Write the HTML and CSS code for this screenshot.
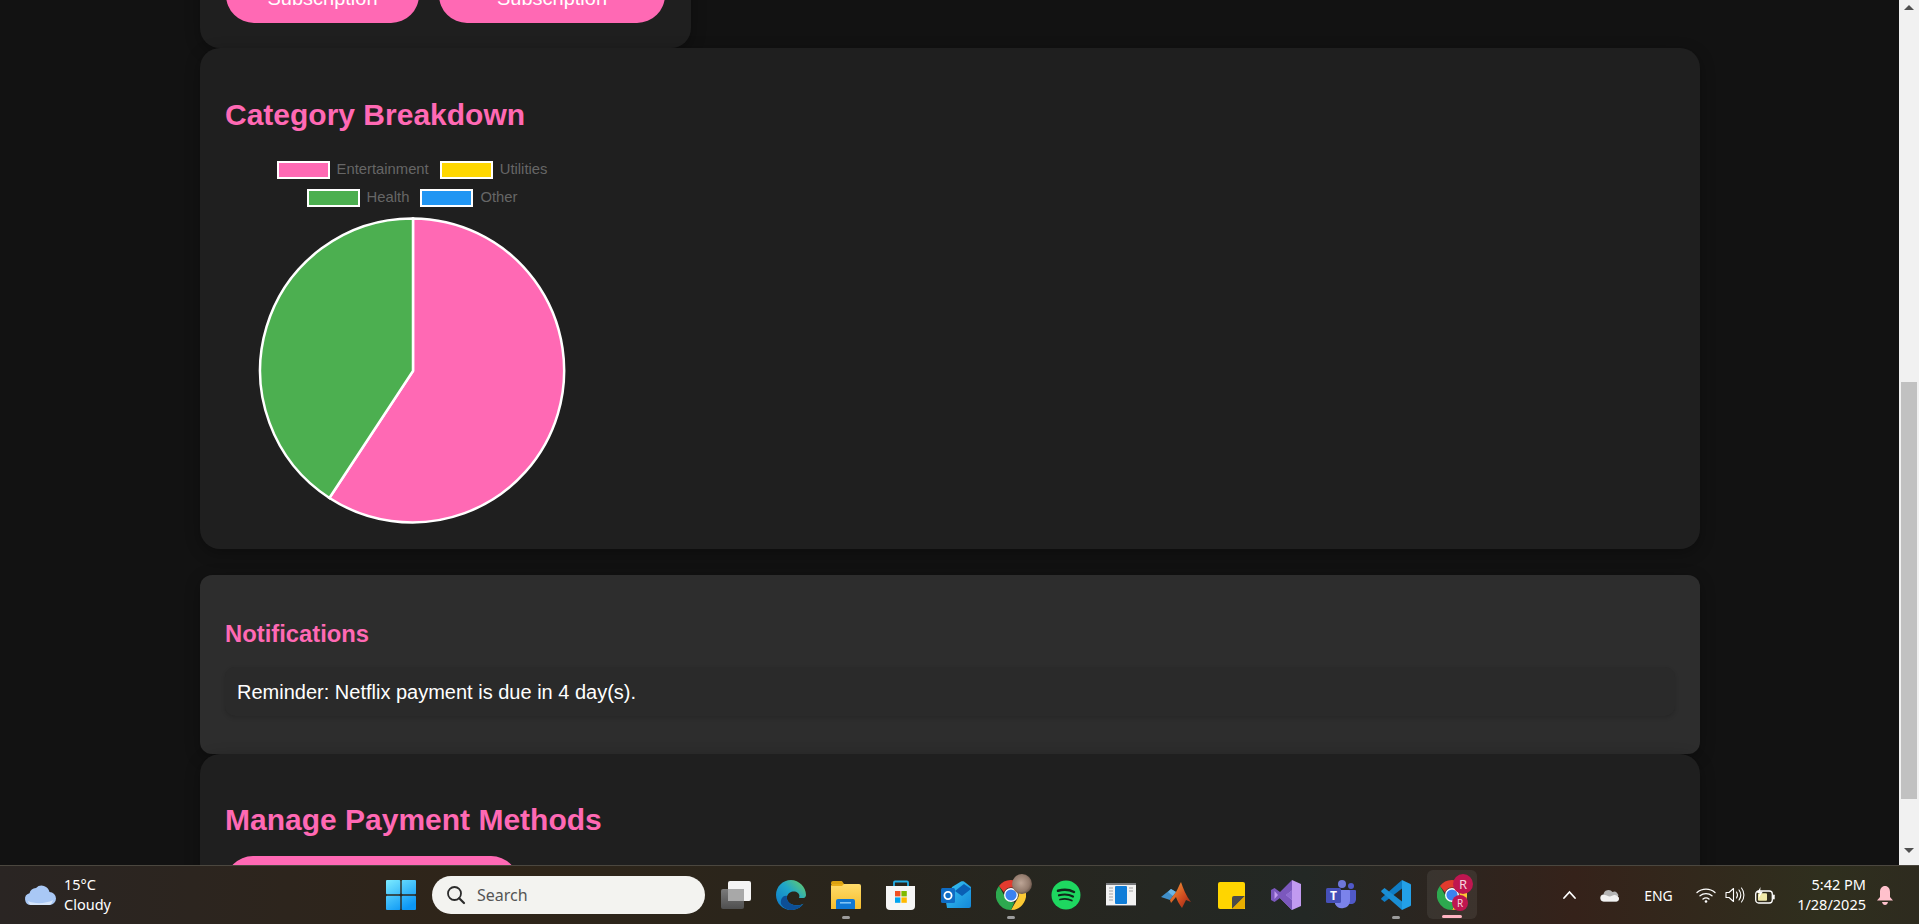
FILE: index.html
```html
<!DOCTYPE html>
<html lang="en">
<head>
    <meta charset="UTF-8">
    <meta name="viewport" content="width=device-width, initial-scale=1.0">
    <title>Subscription Tracker</title>
    <link rel="stylesheet" href="styles.css">
</head>
<body>
    <svg class="defs" width="0" height="0" aria-hidden="true">
        <defs>
            <linearGradient id="edgeTop" x1="0" y1="1" x2="1" y2="0"><stop offset="0" stop-color="#0c74c9"/><stop offset=".55" stop-color="#1fa6c9"/><stop offset="1" stop-color="#6fd05f"/></linearGradient>
            <linearGradient id="folderBody" x1="0" y1="0" x2="0" y2="1"><stop offset="0" stop-color="#ffdc6b"/><stop offset="1" stop-color="#f6bd2c"/></linearGradient>
            <linearGradient id="outlookEnv" x1="0" y1="0" x2="1" y2="1"><stop offset="0" stop-color="#38c6f4"/><stop offset="1" stop-color="#1487d8"/></linearGradient>
            <linearGradient id="matlabPeak" x1="0" y1="0" x2="1" y2="1"><stop offset="0" stop-color="#f5a13a"/><stop offset=".6" stop-color="#cf4a1f"/><stop offset="1" stop-color="#8c2415"/></linearGradient>
            <linearGradient id="winTile" gradientUnits="userSpaceOnUse" x1="0" y1="0" x2="18" y2="30"><stop offset="0" stop-color="#7cebff"/><stop offset="1" stop-color="#0c97f5"/></linearGradient>
            <linearGradient id="taskBack" x1="0" y1="0" x2="0" y2="1"><stop offset="0" stop-color="#7a7a7a"/><stop offset="1" stop-color="#4f4f4f"/></linearGradient>
            <radialGradient id="avatarPhoto" cx=".45" cy=".45" r=".6"><stop offset="0" stop-color="#bda596"/><stop offset=".7" stop-color="#937b6d"/><stop offset="1" stop-color="#5f4c42"/></radialGradient>
            <symbol id="chrome" viewBox="0 0 30 30">
                <path d="M15 0a15 15 0 0 1 13 7.500H15a7.500 7.500 0 0 0-7 4.800L2.900 6A15 15 0 0 1 15 0z" fill="#e33b2e"/>
                <path d="M28 7.500A15 15 0 0 1 15 30l6.500-11.200A7.500 7.500 0 0 0 21.500 11z" fill="#fcc934"/>
                <path d="M2.900 6l6.600 11.500a7.500 7.500 0 0 0 9 4.500L15 30A15 15 0 0 1 2.900 6z" fill="#2da94f"/>
                <circle cx="15" cy="15" r="7" fill="#fff"/>
                <circle cx="15" cy="15" r="5.600" fill="#3b82f0"/>
            </symbol>
        </defs>
    </svg>

    <div class="window">
        <main class="page">
            <section class="card plans-card">
                <div class="plan-btns">
                    <button type="button" class="btn btn-first">Subscription</button>
                    <button type="button" class="btn btn-second">Subscription</button>
                </div>
            </section>

            <section class="card breakdown-card">
                <h2>Category Breakdown</h2>
                <div class="chart">
                    <div class="legend">
                        <div class="legend-row">
                            <span class="legend-item"><i class="swatch pink"></i>Entertainment</span>
                            <span class="legend-item"><i class="swatch yellow"></i>Utilities</span>
                        </div>
                        <div class="legend-row">
                            <span class="legend-item"><i class="swatch green"></i>Health</span>
                            <span class="legend-item"><i class="swatch blue"></i>Other</span>
                        </div>
                    </div>
                    <svg class="pie" width="310" height="310" viewBox="0 0 310 310">
                        <path d="M155 155L155 2.500A152 152 0 1 1 71.400 282Z" fill="#ff69b4" stroke="#fff" stroke-width="2.500"/>
                        <path d="M155 155L71.400 282A152 152 0 0 1 155 2.500Z" fill="#4caf50" stroke="#fff" stroke-width="2.500"/>
                    </svg>
                </div>
            </section>

            <section class="notifications">
                <h3>Notifications</h3>
                <div class="notice">Reminder: Netflix payment is due in 4 day(s).</div>
            </section>

            <section class="card payment-card">
                <h2>Manage Payment Methods</h2>
                <button type="button" class="btn btn-pay">Add Payment Method</button>
            </section>
        </main>

        <div class="scrollbar">
            <span class="arrow-up"></span>
            <span class="thumb"></span>
            <span class="arrow-down"></span>
        </div>
    </div>

    <footer class="taskbar">
        <div class="weather">
            <svg width="32" height="22" viewBox="0 0 32 22">
                <path d="M7 21a6 6 0 0 1-1.500-11.800A7 7 0 0 1 12 4a8 8 0 0 1 13.500 4A6.500 6.500 0 0 1 25.500 21z" fill="#a9c8f5"/>
                <path d="M4 17c6 3 18 3 25-1-1 3-2 5-4 5H7c-1.500 0-2.500-2-3-4z" fill="#d7e6fb"/>
            </svg>
            <div class="weather-text">
                <span>15°C</span>
                <span>Cloudy</span>
            </div>
        </div>

        <div class="tb-center">
            <div class="tb-slot start-slot">
                <svg width="30" height="30" viewBox="0 0 30 30" fill="url(#winTile)">
                    <rect x="0" y="0" width="14.300" height="14.300" rx="1"/>
                    <rect x="15.700" y="0" width="14.300" height="14.300" rx="1"/>
                    <rect x="0" y="15.700" width="14.300" height="14.300" rx="1"/>
                    <rect x="15.700" y="15.700" width="14.300" height="14.300" rx="1"/>
                </svg>
            </div>
            <div class="search">
                <svg width="20" height="20" viewBox="0 0 20 20">
                    <circle cx="8.500" cy="8.500" r="6.500" fill="none" stroke="#2b2b2b" stroke-width="1.800"/>
                    <path d="M13.200 13.200L18 18" stroke="#2b2b2b" stroke-width="2.200" stroke-linecap="round"/>
                </svg>
                <span>Search</span>
            </div>

            <div class="tb-slot">
                <svg width="30" height="30" viewBox="0 0 30 30">
                    <rect x="0" y="9" width="23" height="20" rx="2" fill="url(#taskBack)"/>
                    <rect x="7" y="1" width="23" height="20" rx="2" fill="#f4f4f4"/>
                    <rect x="7" y="9" width="16" height="12" fill="#a8a8a8"/>
                </svg>
            </div>
            <div class="tb-slot">
                <svg width="30" height="30" viewBox="0 0 30 30">
                    <path d="M15 0C6.700 0 0 6.700 0 15c0 8.300 6.700 15 15 15 5.200 0 9.700-2.500 12.400-6.300-2.400 1.300-5.200 1.800-7.500 1.500C13.500 25 10 20.500 11 16.500 12 12.500 16.500 10.500 20 11.800c3.800 1.500 3.800 4.800 3 6.200h4.500c1.500 0 2.500-1.500 2.500-3C30 7 23 0 15 0z" fill="url(#edgeTop)"/>
                    <path d="M11 16c-3-1-7 2-6 8 2 3.500 6 6 10 6 5.200 0 9.700-2.500 12.400-6.300-2.400 1.300-5.200 1.800-7.500 1.500C14 25 10 20.500 11 16z" fill="#0d4f96"/>
                </svg>
            </div>
            <div class="tb-slot running">
                <svg width="30" height="30" viewBox="0 0 30 30">
                    <path d="M0 3a2 2 0 0 1 2-2h8c1 0 1.500.5 2 1.500L13 4h-13z" fill="#dba210"/>
                    <path d="M0 29V6a2 2 0 0 1 2-2h26a2 2 0 0 1 2 2v22a1 1 0 0 1-1 1z" fill="url(#folderBody)"/>
                    <path d="M0 6h11l2-2H2a2 2 0 0 0-2 2z" fill="#e9ad16"/>
                    <path d="M5 29v-8a2 2 0 0 1 2-2h15a2 2 0 0 1 2 2v8z" fill="#0f78d4"/>
                    <rect x="9" y="22" width="11" height="1.600" fill="#7fc4f5"/>
                </svg>
            </div>
            <div class="tb-slot">
                <svg width="30" height="30" viewBox="0 0 30 30">
                    <path d="M8 6V2.500A1 1 0 0 1 9 1.500H21a1 1 0 0 1 1 1V6" fill="none" stroke="#22aee8" stroke-width="1.800"/>
                    <path d="M0 6h29v20a4 4 0 0 1-4 4H4a4 4 0 0 1-4-4z" fill="#f6f6f6"/>
                    <rect x="9" y="11" width="5.400" height="5.400" fill="#f25022"/>
                    <rect x="15.400" y="11" width="5.400" height="5.400" fill="#7fba00"/>
                    <rect x="9" y="17.400" width="5.400" height="5.400" fill="#00a4ef"/>
                    <rect x="15.400" y="17.400" width="5.400" height="5.400" fill="#ffb900"/>
                </svg>
            </div>
            <div class="tb-slot">
                <svg width="30" height="30" viewBox="0 0 30 30">
                    <path d="M11 7l9-5.500c1-.5 2-.5 3 0L30 7v19a2 2 0 0 1-2 2H6l-1-6z" fill="url(#outlookEnv)"/>
                    <path d="M14 11L23 4l7 5-9 7z" fill="#0a5fb4"/>
                    <rect x="0" y="8" width="14" height="15" rx="1.500" fill="#0f6cc4"/>
                    <circle cx="7" cy="15.500" r="3.600" fill="none" stroke="#fff" stroke-width="1.800"/>
                </svg>
            </div>
            <div class="tb-slot running chrome-slot">
                <svg width="30" height="30"><use href="#chrome"/></svg>
                <svg class="badge-photo" width="20" height="20" viewBox="0 0 20 20"><circle cx="10" cy="10" r="10" fill="url(#avatarPhoto)"/></svg>
            </div>
            <div class="tb-slot">
                <svg width="30" height="30" viewBox="0 0 30 30">
                    <circle cx="15" cy="15" r="14.500" fill="#1ed760"/>
                    <path d="M7 10.800c5-1.500 11.500-1.200 16 1.200" fill="none" stroke="#10251a" stroke-width="2.500" stroke-linecap="round"/>
                    <path d="M8 15.300c4.500-1.200 10-.9 14 1.200" fill="none" stroke="#10251a" stroke-width="2.200" stroke-linecap="round"/>
                    <path d="M9 19.500c3.800-1 8.500-.7 11.800 1" fill="none" stroke="#10251a" stroke-width="1.800" stroke-linecap="round"/>
                </svg>
            </div>
            <div class="tb-slot">
                <svg width="30" height="30" viewBox="0 0 30 30">
                    <rect x="0" y="3" width="30" height="23" fill="#f2f2f2"/>
                    <rect x="0" y="3" width="30" height="2" fill="#77797c"/>
                    <rect x="9" y="6" width="12" height="18" rx="1" fill="#0f7dd8"/>
                    <path d="M3 8h4M3 11h4M3 14h4M3 17h4M3 20h4M23 8h4M23 11h4" stroke="#a3a3a3" stroke-width="1"/>
                    <rect x="0" y="25" width="30" height="1" fill="#77797c"/>
                </svg>
            </div>
            <div class="tb-slot">
                <svg width="30" height="30" viewBox="0 0 30 30">
                    <path d="M0 17L10 9l5 3-6 8z" fill="#3f8fc9"/>
                    <path d="M10 9l5 3-3 4-5-4z" fill="#6cb6e6"/>
                    <path d="M20 2c2 6 5 14 10 20l-5-2-4 8c-3-4-5-8-6-11l-5 6-1-3 6-8c2-3 3-7 5-10z" fill="url(#matlabPeak)"/>
                </svg>
            </div>
            <div class="tb-slot sticky-slot">
                <svg width="27" height="27" viewBox="0 0 27 27">
                    <path d="M2 0h23a2 2 0 0 1 2 2v25H2a2 2 0 0 1-2-2V2a2 2 0 0 1 2-2z" fill="#ffd500"/>
                    <path d="M14 27V16a2 2 0 0 1 2-2h11L14 27z" fill="#4a4a4a"/>
                    <path d="M27 14v11a2 2 0 0 1-2 2H14z" fill="#e8ad00"/>
                </svg>
            </div>
            <div class="tb-slot">
                <svg width="30" height="30" viewBox="0 0 30 30">
                    <path d="M21 0l9 4v22l-9 4-12-12 12-8z" fill="#c19af0"/>
                    <path d="M21 0L9 12 3.500 8 0 10v10l3.500 2L9 18l12 12V20l-6-5 6-5z" fill="#7b58bd"/>
                    <path d="M3.500 11l3.500 4-3.500 4z" fill="#c19af0"/>
                    <path d="M21 10l-6 5 6 5z" fill="#8d6bd0"/>
                </svg>
            </div>
            <div class="tb-slot">
                <svg width="30" height="30" viewBox="0 0 30 30">
                    <circle cx="16" cy="4" r="4" fill="#6e77d8"/>
                    <circle cx="25" cy="6" r="3" fill="#5059c9"/>
                    <path d="M21 10h8a1 1 0 0 1 1 1v8c0 3-2 5-5 5h-4z" fill="#5059c9"/>
                    <path d="M9 10h14a1 1 0 0 1 1 1v10a8 8 0 0 1-15 3z" fill="#7b83eb"/>
                    <rect x="0" y="8" width="15" height="15" rx="1.500" fill="#4650b8"/>
                    <text x="7.500" y="20" class="teams-t">T</text>
                </svg>
            </div>
            <div class="tb-slot running">
                <svg width="30" height="30" viewBox="0 0 30 30">
                    <path d="M21 0l8.500 4c.3.200.5.500.5 1v20c0 .5-.2.800-.5 1L21 30V0z" fill="#23a0e8"/>
                    <path d="M21 0v8.500L10 17 3.500 22 .5 19.500c-.5-.5-.5-1 0-1.500L21 0z" fill="#0f7cc4"/>
                    <path d="M21 30v-8.500L3.500 8 .5 10.500c-.5.500-.5 1 0 1.500L21 30z" fill="#1a8ed4"/>
                </svg>
            </div>
            <div class="tb-slot active">
                <svg class="active-icon" width="30" height="30"><use href="#chrome"/></svg>
                <svg class="badge-large" width="20" height="20" viewBox="0 0 20 20"><circle cx="10" cy="10" r="10" fill="#bf1650"/><text x="10" y="14.500" class="badge-r">R</text></svg>
                <svg class="badge-small" width="16" height="16" viewBox="0 0 16 16"><circle cx="8" cy="8" r="8" fill="#bf1650"/><text x="8" y="11.500" class="badge-r small">R</text></svg>
            </div>
        </div>

        <div class="tray">
            <svg class="tray-chevron" width="15" height="10" viewBox="0 0 15 10"><path d="M2 8l5.500-6L13 8" fill="none" stroke="#fff" stroke-width="1.800" stroke-linecap="round"/></svg>
            <svg class="tray-cloud" width="20" height="14" viewBox="0 0 20 14">
                <path d="M4 13.500a3.500 3.500 0 0 1-.5-7A5 5 0 0 1 12.500 4 4 4 0 0 1 18 9a2.500 2.500 0 0 1-1 4.500z" fill="#b5b5b5"/>
                <path d="M4 13.500a3.500 3.500 0 0 1-1-6.800c4 0 6 3 9 1 3-2 6 0 7 2.300-.2 2-1 3.500-3 3.500z" fill="#f2f2f2"/>
            </svg>
            <span class="tray-lang">ENG</span>
            <svg class="tray-wifi" width="20" height="16" viewBox="0 0 20 16">
                <path d="M1 5.500c5-4.500 13-4.500 18 0M4 8.800c3.500-3 8.500-3 12 0M7 12c1.800-1.400 4.200-1.400 6 0" fill="none" stroke="#fff" stroke-width="1.300" stroke-linecap="round"/>
                <circle cx="10" cy="14.500" r="1.300" fill="#fff"/>
            </svg>
            <svg class="tray-volume" width="20" height="16" viewBox="0 0 20 16">
                <path d="M1 5.500v5h3l4.500 4V1.500L4 5.500z" fill="none" stroke="#fff" stroke-width="1.100" stroke-linejoin="round"/>
                <path d="M11.500 5c1.200 1.800 1.200 4.200 0 6M14 3c2.200 3 2.200 7 0 10M16.500 1c3.200 4 3.200 10 0 14" fill="none" stroke="#fff" stroke-width="1.100" stroke-linecap="round"/>
            </svg>
            <svg class="tray-battery" width="20" height="17" viewBox="0 0 20 17">
                <rect x=".7" y="4" width="16.600" height="12" rx="3" fill="none" stroke="#fff" stroke-width="1.300"/>
                <rect x="3" y="6.300" width="9" height="7.400" rx="1" fill="#f0e9a8"/>
                <rect x="18" y="7.500" width="1.700" height="5" rx=".8" fill="#fff"/>
                <path d="M5.500 0L2 6h2.700L3.500 11 8 4.500H5.200z" fill="#fff"/>
            </svg>
            <div class="clock">
                <span>5:42 PM</span>
                <span>1/28/2025</span>
            </div>
            <svg class="tray-bell" width="16" height="19" viewBox="0 0 16 19">
                <path d="M8 0c3 0 5 2.500 5 6v5l3 3.500H0L3 11V6c0-3.500 2-6 5-6z" fill="#ffc1cc"/>
                <path d="M5 16h6c-.5 2-1.500 3-3 3s-2.500-1-3-3z" fill="#ffc1cc"/>
            </svg>
        </div>
    </footer>
</body>
</html>
```

FILE: styles.css
```css
*{margin:0;padding:0;box-sizing:border-box;}
html,body{height:100%;}
body{display:flex;flex-direction:column;overflow:hidden;background:#121212;font-family:"Liberation Sans",Arial,sans-serif;color:#fff;}
.defs{position:absolute;}

.window{flex:1;min-height:0;display:flex;}
.page{flex:1;min-width:0;overflow:hidden;padding:0 199px 0 200px;}

.card{background:#1f1f1f;border-radius:20px;box-shadow:0 4px 15px rgba(0,0,0,0.3);padding:0 25px 25px;}
.card h2{color:#ff69b4;font-size:30px;font-weight:bold;line-height:36px;}

.plans-card{width:491px;margin-top:-60px;padding:0 25px 25px 26px;}
.plan-btns{display:flex;gap:20px;}
.btn{border:none;background:#ff69b4;color:#fff;font-family:inherit;font-size:20px;line-height:24px;border-radius:28px;cursor:pointer;}
.btn-first{width:193px;height:83px;padding-top:33px;}
.btn-second{width:226px;height:83px;padding-top:33px;}

.breakdown-card{height:501px;padding-top:49px;}
.chart{width:376px;margin-top:28px;}
.legend{display:flex;flex-direction:column;gap:10px;margin-right:2px;}
.legend-row{display:flex;justify-content:center;gap:11px;height:18px;}
.legend-item{display:flex;align-items:flex-start;gap:7px;font-size:14.800px;line-height:16px;color:#666;}
.swatch{display:block;width:53px;height:18px;border:2.500px solid #fff;}
.pink{background:#ff69b4;}
.yellow{background:#ffd700;}
.green{background:#4caf50;}
.blue{background:#2196f3;}
.pie{display:block;margin:9px auto 0;}

.notifications{height:179px;margin-top:26px;padding:45px 25px 0;background:#2d2d2d;border-radius:12px;box-shadow:0 4px 15px rgba(0,0,0,0.3);}
.notifications h3{color:#ff69b4;font-size:23.800px;font-weight:bold;line-height:28px;}
.notice{height:49px;margin-top:19px;padding:0 12px;background:#2a2a2a;border-radius:10px;box-shadow:0 2px 4px rgba(0,0,0,0.15);font-size:20px;line-height:50px;}

.payment-card{height:300px;padding-top:48px;}
.btn-pay{display:block;width:294px;height:60px;margin-top:18px;}

.scrollbar{width:20px;background:#f1f1f1;display:flex;flex-direction:column;align-items:center;}
.arrow-up{width:0;height:0;margin-top:5px;border:5px solid transparent;border-top:0;border-bottom-color:#505050;}
.thumb{width:16px;height:417px;margin-top:372px;background:#c1c1c1;}
.arrow-down{width:0;height:0;margin-top:49px;border:5px solid transparent;border-bottom:0;border-top-color:#505050;}

.taskbar{height:59px;flex:none;display:grid;grid-template-columns:373px auto 1fr;align-items:center;border-top:1px solid #4b473f;background:linear-gradient(to right,#2a2523 0,#2f2519 25%,#29251c 45%,#232825 68%,#35221a 82%,#2f2f1e 95%,#2e2b1f 100%);font-family:"Noto Sans",sans-serif;font-size:14.500px;}

.weather{display:flex;align-items:center;gap:8px;padding-left:24px;}
.weather-text{display:flex;flex-direction:column;line-height:20px;margin-top:-2px;}

.tb-center{display:flex;align-items:center;height:58px;}
.tb-slot{position:relative;width:55px;height:58px;padding-left:12px;display:flex;align-items:center;}
.start-slot{padding-left:13px;}
.sticky-slot{padding-left:14px;}
.search{width:273px;height:38px;margin:0 4px;padding-left:14px;display:flex;align-items:center;gap:11px;background:#f3f3f0;border-radius:19px;color:#555;font-size:16px;}

.running::after{content:"";position:absolute;left:23px;bottom:5px;width:8px;height:3px;border-radius:2px;background:#9c9c9c;}
.active{padding-left:13px;}
.active::before{content:"";position:absolute;left:3px;right:2px;top:4px;bottom:5px;background:rgba(255,255,255,0.07);border-radius:6px;}
.active::after{content:"";position:absolute;left:18px;bottom:6px;width:20px;height:3px;border-radius:2px;background:#ffb3c1;}
.active-icon{position:relative;}
.badge-photo{position:absolute;left:28px;top:8px;}
.badge-large{position:absolute;left:29px;top:8px;}
.badge-small{position:absolute;left:28px;top:29px;}
.badge-r{fill:#f6d4de;font-family:"Noto Sans",sans-serif;font-size:13px;text-anchor:middle;}
.badge-r.small{font-size:10px;}
.teams-t{fill:#fff;font-family:"Noto Sans",sans-serif;font-size:12px;font-weight:bold;text-anchor:middle;}

.tray{display:flex;align-items:center;justify-content:flex-end;padding-right:26px;height:58px;}
.tray-chevron{margin-right:1px;}
.tray-lang{margin-left:24px;font-size:14px;width:29px;}
.tray-cloud{margin-left:22px;}
.tray-wifi{margin-left:23px;}
.tray-volume{margin-left:9px;}
.tray-battery{margin-left:10px;}
.clock{display:flex;flex-direction:column;align-items:flex-end;line-height:20px;margin-left:22px;margin-top:-2px;}
.tray-bell{margin-left:11px;}
```
